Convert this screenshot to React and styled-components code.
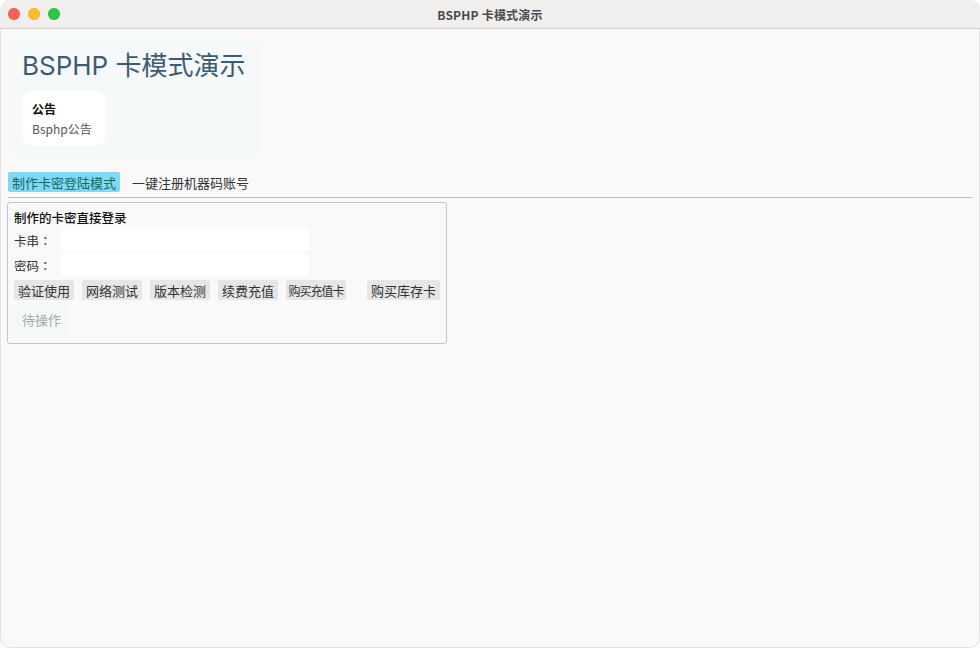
import React from "react";
import styled, { createGlobalStyle } from "styled-components";

const Global = createGlobalStyle`
  html, body { margin: 0; padding: 0; background: #ffffff; }
  body { font-family: "Noto Sans CJK SC", "Liberation Sans", sans-serif; }
  * { box-sizing: border-box; }
`;

const Window = styled.div`
  width: 980px;
  height: 648px;
  border-radius: 10px;
  overflow: hidden;
  background: #f9f9f9;
  display: flex;
  flex-direction: column;
  box-shadow: inset 0 0 0 1px #e4e4e4;
`;

const TitleBar = styled.div`
  height: 29px;
  flex: none;
  display: flex;
  align-items: center;
  position: relative;
  background: #f0efee;
  border-bottom: 1px solid #d3d3d3;
  padding-left: 8px;
  gap: 8px;
`;

const Light = styled.span`
  width: 12px;
  height: 12px;
  border-radius: 50%;
  background: ${(p) => p.$c};
  box-shadow: inset 0 0 0 0.5px rgba(0,0,0,0.12);
`;

const TitleText = styled.div`
  position: absolute;
  left: 0;
  right: 0;
  top: 0;
  bottom: 0;
  display: flex;
  align-items: center;
  justify-content: center;
  font-size: 12px;
  font-weight: 700;
  color: #4b4b4b;
  letter-spacing: 0.2px;
`;

const Body = styled.div`
  flex: 1;
  padding: 9px 8px 0 8px;
  display: flex;
  flex-direction: column;
`;

const Header = styled.div`
  width: 254px;
  height: 118px;
  background: #f5f9f9;
  border-radius: 10px;
  padding: 12px 14px;
  display: flex;
  flex-direction: column;
  align-items: flex-start;
`;

const BigTitle = styled.div`
  font-family: "Inter", "Noto Sans CJK SC", sans-serif;
  font-size: 26px;
  line-height: 32px;
  color: #3e5b74;
  font-weight: 400;
`;

const Notice = styled.div`
  margin-top: 9px;
  width: 84px;
  height: 56px;
  background: #ffffff;
  border-radius: 10px;
  padding: 9px 10px;
  display: flex;
  flex-direction: column;
  gap: 3px;
`;

const NoticeTitle = styled.div`
  font-size: 12px;
  line-height: 17px;
  font-weight: 700;
  color: #111;
`;

const NoticeText = styled.div`
  font-size: 12px;
  line-height: 17px;
  color: #555;
`;

const Tabs = styled.div`
  margin-top: 16px;
  display: flex;
  align-items: center;
  gap: 8px;
  height: 20px;
`;

const Tab = styled.div`
  height: 20px;
  padding: 0 4px;
  display: flex;
  align-items: center;
  font-size: 13px;
  border-radius: 2px;
  background: ${(p) => (p.$active ? "#80d8f5" : "transparent")};
  color: ${(p) => (p.$active ? "#17695f" : "#333")};
`;

const Separator = styled.div`
  margin-top: 5px;
  height: 1px;
  width: 964px;
  background: #bdbdbd;
`;

const Group = styled.div`
  margin-top: 4px;
  margin-left: -1px;
  width: 440px;
  height: 142px;
  border: 1px solid #c4c4c4;
  border-radius: 3px;
  padding: 6px 6px 0 6px;
  display: flex;
  flex-direction: column;
`;

const GroupTitle = styled.div`
  font-size: 12.5px;
  line-height: 18px;
  font-weight: 500;
  color: #111;
`;

const Row = styled.div`
  display: flex;
  align-items: center;
  height: 22px;
  margin-top: ${(p) => p.$mt || 0}px;
`;

const Label = styled.div`
  width: 47px;
  font-family: "Noto Sans CJK TC", "Noto Sans CJK SC", sans-serif;
  font-size: 12.5px;
  color: #333;
`;

const Input = styled.div`
  width: 248px;
  height: 22px;
  background: #ffffff;
`;

const Buttons = styled.div`
  margin-top: 4px;
  display: flex;
  align-items: center;
  gap: 8px;
`;

const Btn = styled.div`
  height: 20px;
  display: flex;
  align-items: center;
  justify-content: center;
  background: #e6e6e6;
  border-radius: 2px;
  font-size: ${(p) => p.$fs || 13}px;
  color: #333;
  white-space: nowrap;
  width: ${(p) => p.$w}px;
  letter-spacing: ${(p) => p.$ls || 0}px;
  margin-left: ${(p) => p.$ml || 0}px;
`;

const Status = styled.div`
  margin-top: 3px;
  width: 55px;
  height: 33px;
  background: #f4f8f8;
  border-radius: 8px;
  display: flex;
  align-items: center;
  justify-content: center;
  font-size: 13px;
  color: #aaa;
`;

export default function App() {
  return (
    <>
      <Global />
      <Window>
        <TitleBar>
          <Light $c="#fe5f57" />
          <Light $c="#febc2e" />
          <Light $c="#28c840" />
          <TitleText>BSPHP 卡模式演示</TitleText>
        </TitleBar>
        <Body>
          <Header>
            <BigTitle>BSPHP 卡模式演示</BigTitle>
            <Notice>
              <NoticeTitle>公告</NoticeTitle>
              <NoticeText>Bsphp公告</NoticeText>
            </Notice>
          </Header>
          <Tabs>
            <Tab $active>制作卡密登陆模式</Tab>
            <Tab>一键注册机器码账号</Tab>
          </Tabs>
          <Separator />
          <Group>
            <GroupTitle>制作的卡密直接登录</GroupTitle>
            <Row $mt={2}>
              <Label>卡串：</Label>
              <Input />
            </Row>
            <Row $mt={3}>
              <Label>密码：</Label>
              <Input />
            </Row>
            <Buttons>
              <Btn $w={60}>验证使用</Btn>
              <Btn $w={60}>网络测试</Btn>
              <Btn $w={60}>版本检测</Btn>
              <Btn $w={60}>续费充值</Btn>
              <Btn $w={60} $fs={12} $ls={-1}>购买充值卡</Btn>
              <Btn $w={73} $ml={13}>购买库存卡</Btn>
            </Buttons>
            <Status>待操作</Status>
          </Group>
        </Body>
      </Window>
    </>
  );
}
